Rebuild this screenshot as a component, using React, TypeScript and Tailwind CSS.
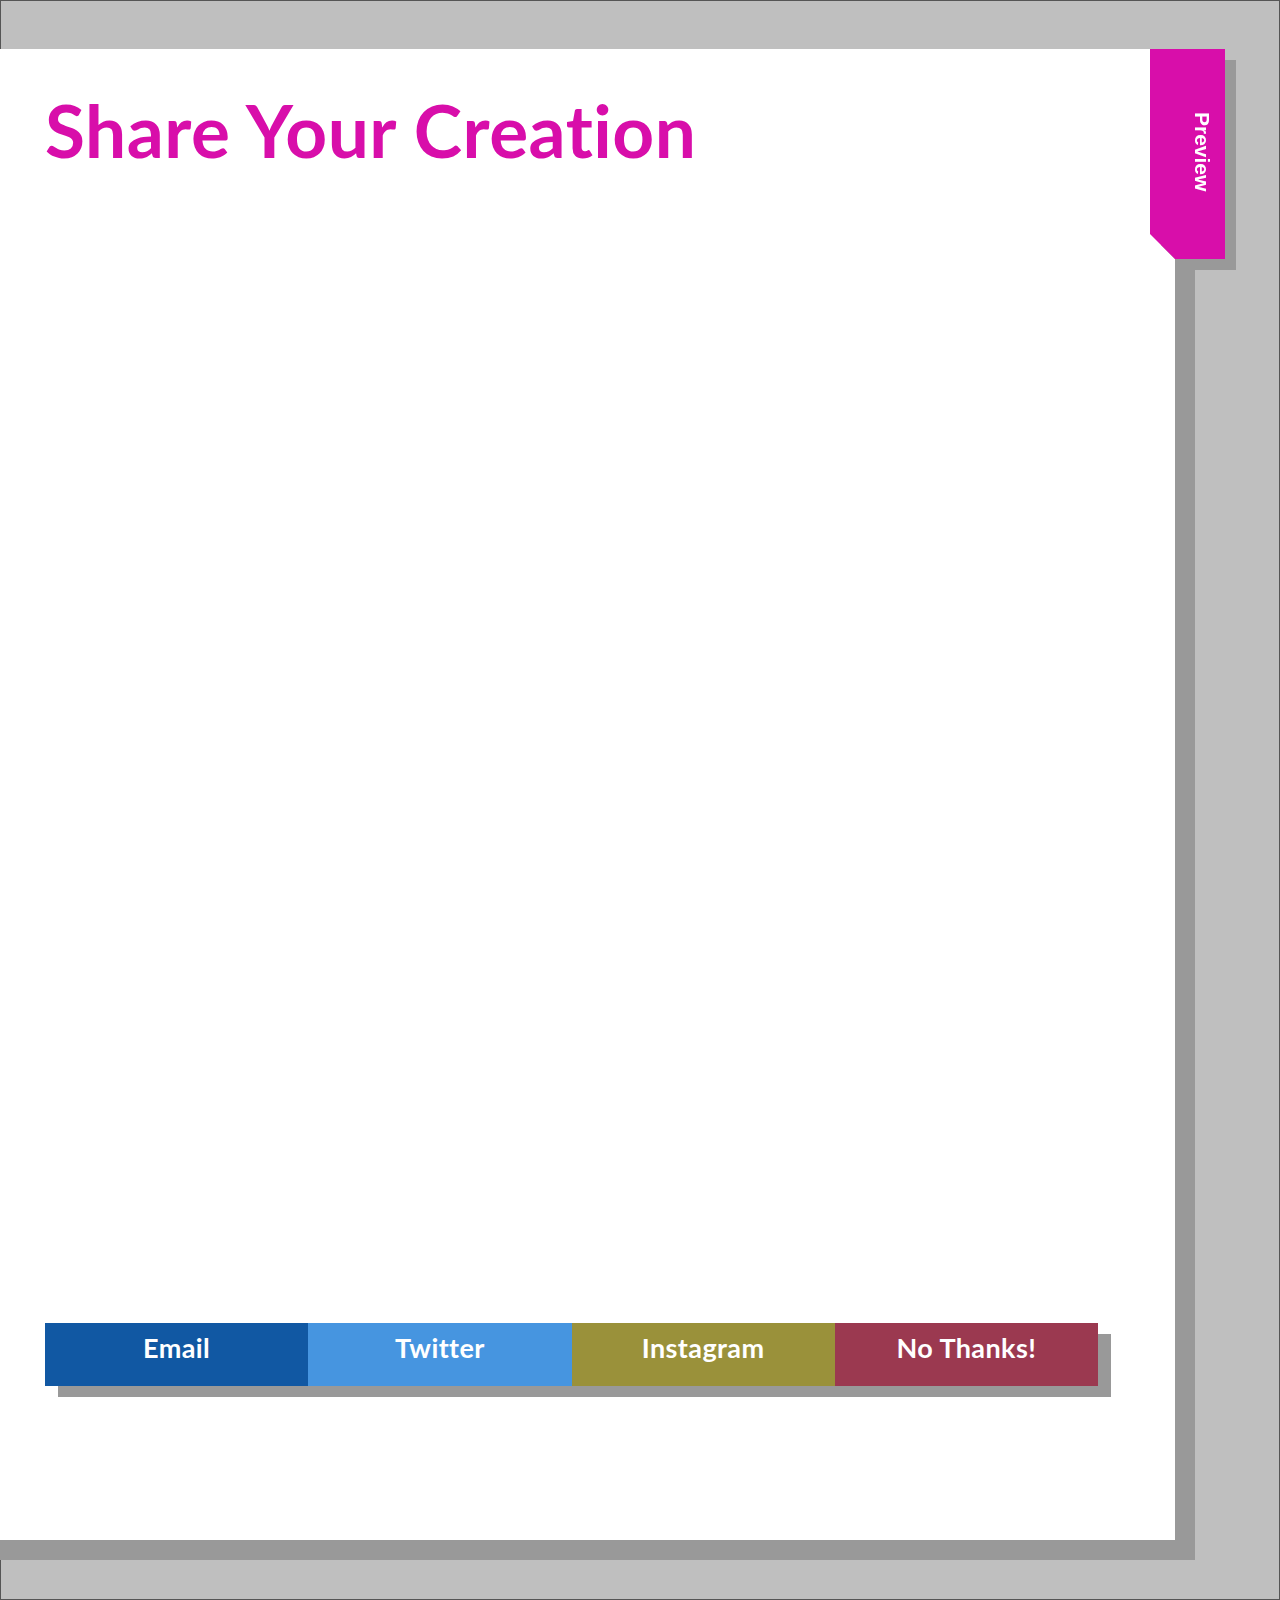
export default function App() {
  const buttons = [
    { label: "Email", color: "bg-[#1158a3]" },
    { label: "Twitter", color: "bg-[#4695e0]" },
    { label: "Instagram", color: "bg-[#9a913a]" },
    { label: "No Thanks!", color: "bg-[#9b3950]" },
  ];

  return (
    <div className="w-[1280px] h-[1600px] border border-[#555555] bg-[#bfbfbf] pt-[48px] font-['Lato',sans-serif]">
      <div className="relative -ml-[21px] w-[1195px] h-[1491px] bg-white shadow-[20px_20px_0_#999999] pl-[65px] pt-[41px] flex flex-col">
        <h1 className="text-[73px] leading-[80px] font-bold text-[#d80eaa] tracking-[0.5px] [font-variant-ligatures:none]">
          Share Your Creation
        </h1>

        {/* preview tab */}
        <div className="absolute top-0 left-[1170px] drop-shadow-[11px_11px_0_#999999]">
          <div className="w-[75px] h-[210px] bg-[#d80eaa] [clip-path:polygon(0_0,100%_0,100%_100%,25px_100%,0_185px)] flex justify-end pr-[12px] pt-[63px]">
            <span className="[writing-mode:vertical-rl] text-white font-bold text-[21px] leading-[21px] font-['Liberation_Sans',sans-serif]">
              Preview
            </span>
          </div>
        </div>

        <div className="mt-[1153px] w-[1053px] flex shadow-[13px_11px_0_#999999]">
          {buttons.map((b) => (
            <button
              key={b.label}
              className={`${b.color} flex-1 h-[63px] text-white font-bold text-[27px] leading-none pb-[14px] tracking-[0.4px]`}
            >
              {b.label}
            </button>
          ))}
        </div>
      </div>
    </div>
  );
}
